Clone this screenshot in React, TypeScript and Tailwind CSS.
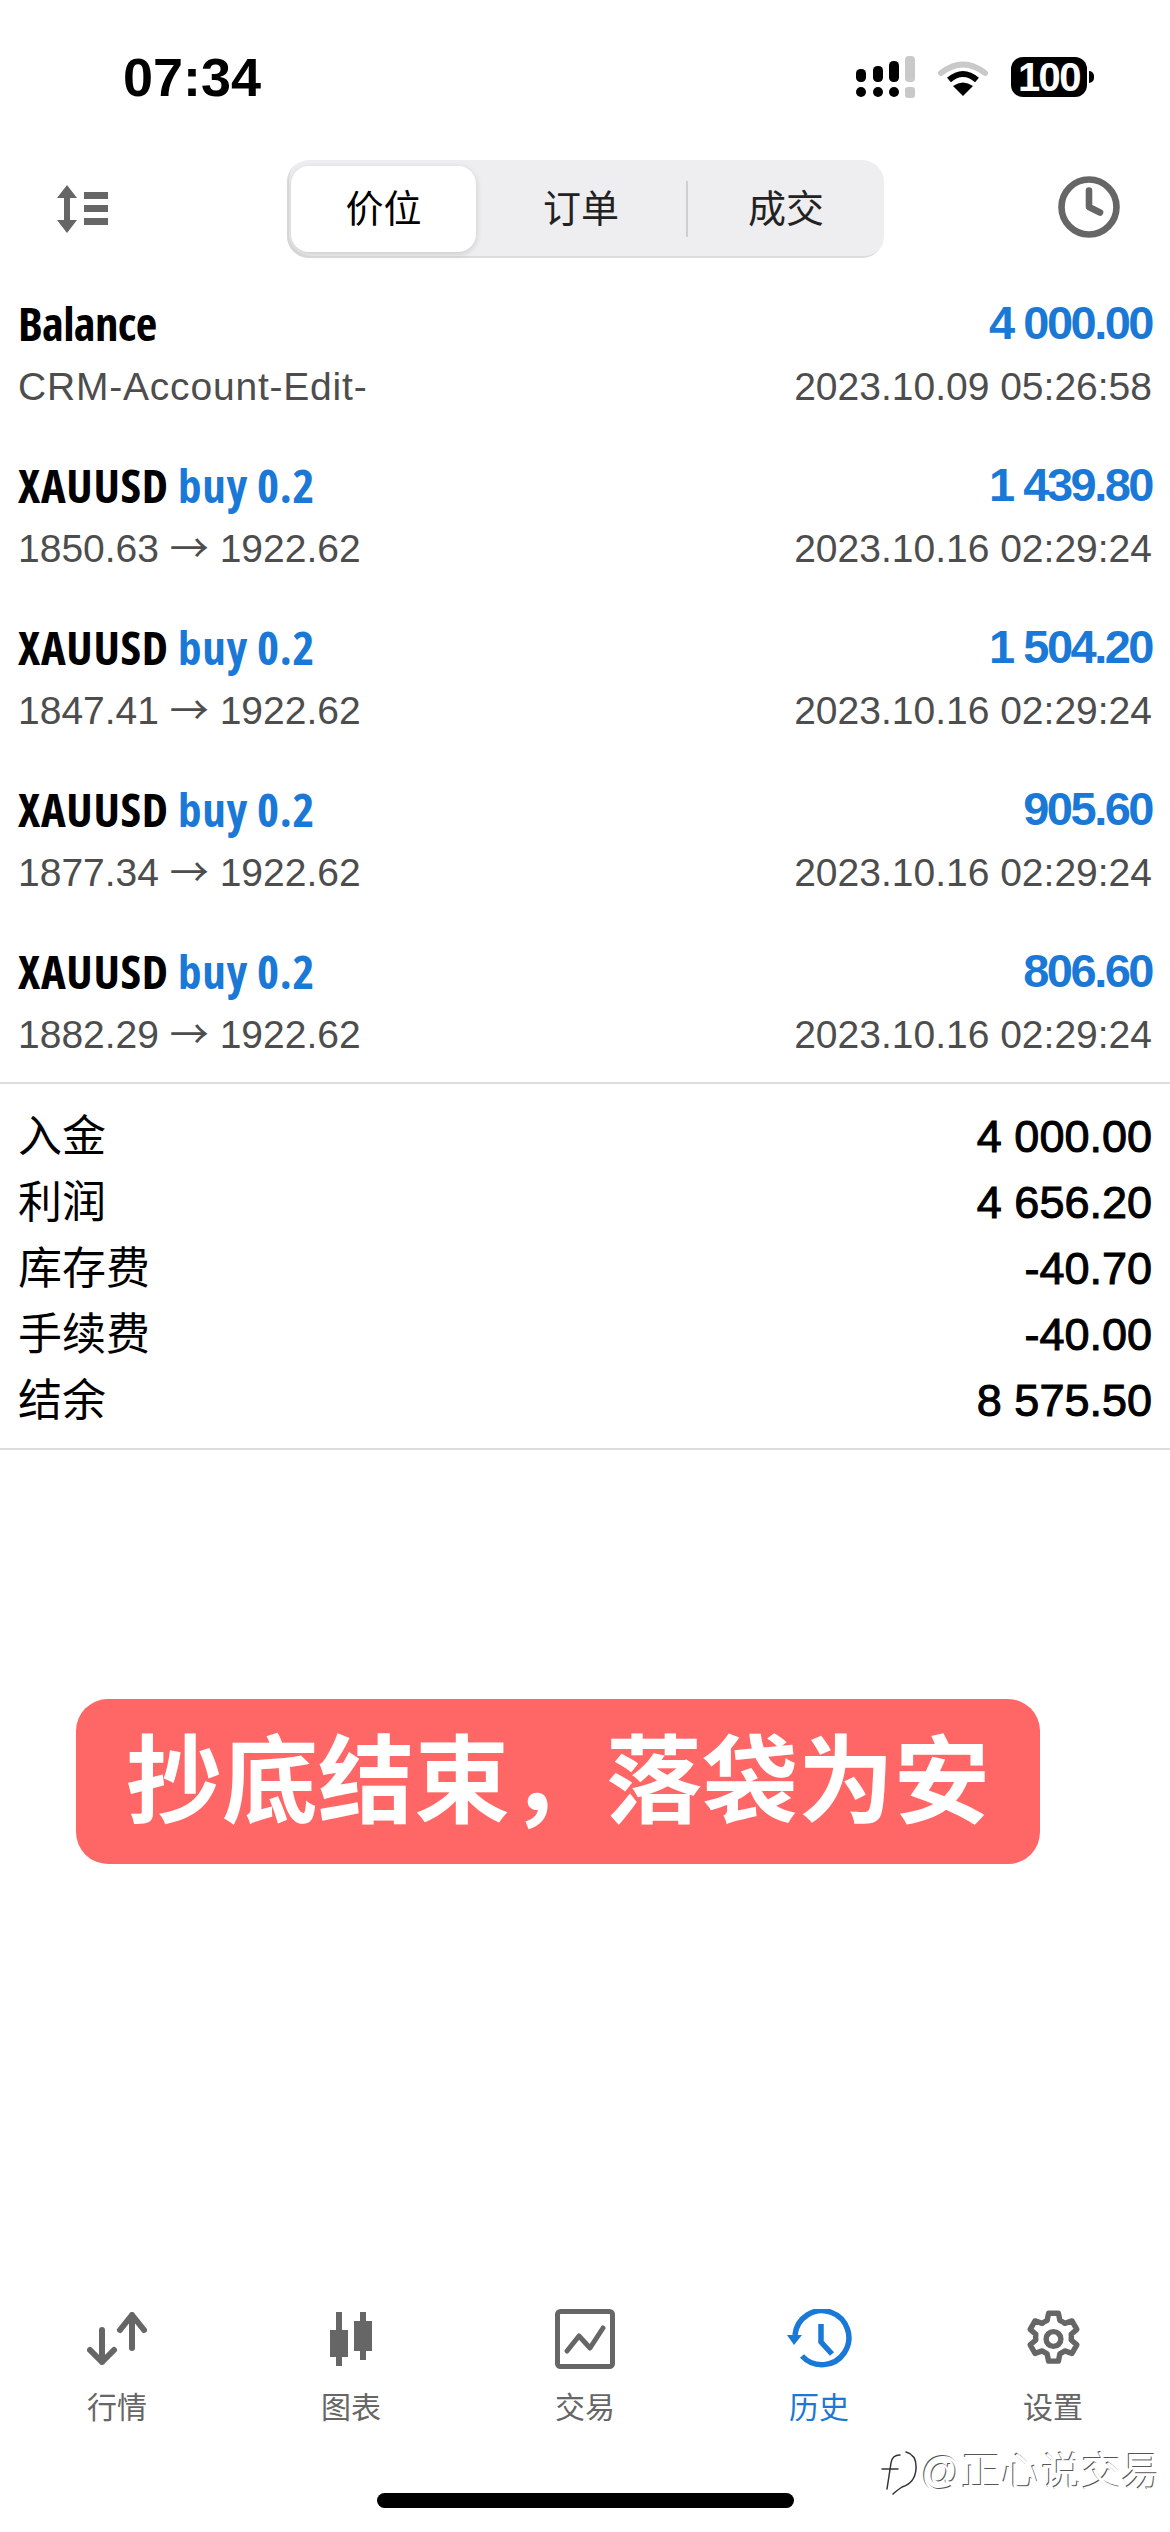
import { Clock4 } from "lucide-react";

const rows = [
  { amount: "1 439.80", from: "1850.63", date: "2023.10.16 02:29:24" },
  { amount: "1 504.20", from: "1847.41", date: "2023.10.16 02:29:24" },
  { amount: "905.60", from: "1877.34", date: "2023.10.16 02:29:24" },
  { amount: "806.60", from: "1882.29", date: "2023.10.16 02:29:24" },
];

const summary = [
  ["入金", "4 000.00"],
  ["利润", "4 656.20"],
  ["库存费", "-40.70"],
  ["手续费", "-40.00"],
  ["结余", "8 575.50"],
];

const sans = "font-['Liberation_Sans','Noto_Sans_CJK_SC',sans-serif]";
const cond = "font-['Open_Sans','Noto_Sans',sans-serif] font-bold [font-stretch:75%]";

function StatusIcons() {
  return (
    <div className="flex items-center">
      <svg width="60" height="42" viewBox="0 0 60 42">
        <rect x="0" y="13" width="10" height="13" rx="4.5" fill="#000" />
        <rect x="17" y="10" width="10" height="16" rx="4.5" fill="#000" />
        <rect x="33" y="5" width="10" height="21" rx="4.5" fill="#000" />
        <rect x="49" y="0" width="10" height="26" rx="4" fill="#c9c9c9" />
        <circle cx="5" cy="36" r="5" fill="#000" />
        <circle cx="22" cy="36" r="5" fill="#000" />
        <circle cx="38" cy="36" r="5" fill="#000" />
        <rect x="49" y="31" width="10" height="11" rx="3" fill="#c9c9c9" />
      </svg>
      <svg width="50" height="37" viewBox="0 0 50 37" className="ml-[22px]">
        <path d="M3 14 Q25 -3 47 14" fill="none" stroke="#c9c9c9" strokeWidth="6" strokeLinecap="round" />
        <path d="M11 21 Q25 9 39 21" fill="none" stroke="#000" strokeWidth="6" />
        <path d="M25 37 L15 27 Q25 20 35 27 Z" fill="#000" />
      </svg>
      <div className="ml-[23px] flex items-center">
        <div className={`flex h-[40px] w-[76px] items-center justify-center rounded-[12px] bg-black text-[40px] font-bold tracking-[-1.5px] text-white ${sans}`}>100</div>
        <div className="ml-[2px] h-[12px] w-[5px] rounded-r-full bg-black" />
      </div>
    </div>
  );
}

function SortIcon() {
  return (
    <svg width="52" height="48" viewBox="0 0 52 48" fill="#666">
      <path d="M11 0 L21 13 L14 13 L14 35 L21 35 L11 48 L1 35 L8 35 L8 13 L1 13 Z" />
      <rect x="28" y="7" width="24" height="7" />
      <rect x="28" y="20" width="24" height="7" />
      <rect x="28" y="33" width="24" height="7" />
    </svg>
  );
}

function ArrowsIcon() {
  return (
    <svg width="60" height="54" viewBox="0 0 60 54" fill="none" stroke="#666" strokeWidth="6" strokeLinecap="round" strokeLinejoin="round">
      <path d="M15 18 V50 M3 38 L15 50 L27 38" />
      <path d="M45 3 V36 M33 18 L45 3 L57 18" />
    </svg>
  );
}

function CandleIcon() {
  return (
    <svg width="42" height="54" viewBox="0 0 42 54" fill="#666">
      <rect x="6" y="0" width="6" height="54" />
      <rect x="0" y="18" width="18" height="27" />
      <rect x="30" y="0" width="6" height="48" />
      <path fillRule="evenodd" d="M24 9 H42 V39 H24 Z M30 15 V33 H36 V15 Z" />
    </svg>
  );
}

function TradeIcon() {
  return (
    <svg width="60" height="60" viewBox="0 0 60 60" fill="none" stroke="#666" strokeLinecap="round" strokeLinejoin="round">
      <rect x="2.5" y="2.5" width="55" height="55" rx="3" strokeWidth="5" />
      <path d="M12 42 L24 27 L35 39 L48 19" strokeWidth="5" />
    </svg>
  );
}

function HistoryIcon() {
  return (
    <svg width="65" height="60" viewBox="0 0 65 60" fill="none" stroke="#1a78d6" strokeWidth="5.5">
      <path d="M8 26 A27 27 0 1 1 15 47" />
      <path d="M0 26 L15 26 L7 36 Z" fill="#1a78d6" stroke="none" />
      <path d="M34 15 V33 L45 45" />
    </svg>
  );
}

function GearIcon() {
  return (
    <svg width="59" height="60" viewBox="0 0 24 24" fill="none" stroke="#666" strokeWidth="2.2" strokeLinejoin="round">
      <path d="M10 1.5 h4 l.6 3 a8 8 0 0 1 2 1.15 l2.9 -1 2 3.45 -2.3 2 a8 8 0 0 1 0 2.3 l2.3 2 -2 3.45 -2.9 -1 a8 8 0 0 1 -2 1.15 l-.6 3 h-4 l-.6 -3 a8 8 0 0 1 -2 -1.15 l-2.9 1 -2 -3.45 2.3 -2 a8 8 0 0 1 0 -2.3 l-2.3 -2 2 -3.45 2.9 1 a8 8 0 0 1 2 -1.15 z" />
      <circle cx="12" cy="12" r="3" />
    </svg>
  );
}

function WatermarkLogo() {
  return (
    <svg width="38" height="46" viewBox="0 0 38 46" fill="none" stroke="#333" strokeWidth="1.5" strokeLinecap="round">
      <path d="M26 3 Q37 6 36 20 Q35 34 22 38 Q16 42 13 45" />
      <path d="M20 6 Q12 6 11 14 L7 40" />
      <path d="M2 20 H18" />
    </svg>
  );
}

function TabItem({ icon, label, active }: { icon: React.ReactNode; label: string; active?: boolean }) {
  return (
    <div className="flex flex-col items-center">
      <div className="flex h-[60px] items-center justify-center">{icon}</div>
      <div className={`mt-[20px] text-[30px] leading-[38px] ${active ? "text-[#1a78d6]" : "text-[#666]"}`}>{label}</div>
    </div>
  );
}

function HistoryRow({ title, amount, sub, date }: { title: React.ReactNode; amount: string; sub: React.ReactNode; date: string }) {
  return (
    <div>
      <div className="flex h-[56px] items-center justify-between">
        <div className={`text-[47px] leading-[56px] text-black ${cond}`}>{title}</div>
        <div className={`text-[47px] font-bold tracking-[-2.5px] text-[#1a78d6] ${sans}`}>{amount}</div>
      </div>
      <div className="mt-[12px] flex h-[48px] items-center justify-between text-[39px] leading-[48px] text-[#4d4d4d]">
        <div>{sub}</div>
        <div>{date}</div>
      </div>
    </div>
  );
}

export default function App() {
  return (
    <div className={`relative flex h-[2532px] w-[1170px] flex-col overflow-hidden bg-white ${sans}`}>
      <div className="flex h-[154px] items-center justify-between pl-[123px] pr-[76px]">
        <div className="text-[54px] font-bold text-black">07:34</div>
        <StatusIcons />
      </div>

      <div className="mt-[6px] flex h-[98px] items-center pl-[56px] pr-[48px]">
        <SortIcon />
        <div className="ml-[179px] flex h-[98px] w-[597px] items-center rounded-[22px] bg-[#eeeef0] pl-[4px] shadow-[inset_2px_-2px_0_#dcdcdc]">
          <div className="flex h-[86px] w-[185px] items-center justify-center rounded-[18px] bg-white text-[38px] text-black shadow-[0_2px_6px_rgba(0,0,0,0.15)]">价位</div>
          <div className="flex w-[210px] justify-center text-[38px] text-[#222]">订单</div>
          <div className="h-[56px] w-[2px] bg-[#cfcfcf]" />
          <div className="flex flex-1 justify-center text-[38px] text-[#222]">成交</div>
        </div>
        <Clock4 size={66} color="#666" strokeWidth={2.4} className="ml-auto -mt-[4px]" />
      </div>

      <div className="mt-[37px] flex flex-col gap-[46px] px-[18px] pb-[23px]">
        <HistoryRow
          title={<span className="tracking-[-0.7px]">Balance</span>}
          amount="4 000.00"
          sub={<span className="tracking-[0.8px]">CRM-Account-Edit-</span>}
          date="2023.10.09 05:26:58"
        />
        {rows.map((r) => (
          <HistoryRow
            key={r.amount}
            title={
              <span className="tracking-[0.7px]">
                XAUUSD <span className="text-[#1a78d6]">buy 0.2</span>
              </span>
            }
            amount={r.amount}
            sub={
              <>
                {r.from} <span className="font-['Noto_Sans_CJK_SC',sans-serif] leading-none">→</span> 1922.62
              </>
            }
            date={r.date}
          />
        ))}
      </div>

      <div className="border-y-2 border-[#dcdcdc] px-[18px] pb-[14px] pt-[20px]">
        {summary.map(([label, value]) => (
          <div key={label} className="flex h-[66px] items-center justify-between text-black">
            <div className="text-[44px]">{label}</div>
            <div className="text-[45px] [-webkit-text-stroke:1px_#000]">{value}</div>
          </div>
        ))}
      </div>

      <div className="ml-[76px] mt-[249px] flex h-[165px] w-[964px] items-center justify-center rounded-[32px] bg-[#ff6666] text-[96px] font-bold text-white">
        抄底结束，落袋为安
      </div>

      <div className="mt-auto grid grid-cols-5">
        <TabItem icon={<ArrowsIcon />} label="行情" />
        <TabItem icon={<CandleIcon />} label="图表" />
        <TabItem icon={<TradeIcon />} label="交易" />
        <TabItem icon={<HistoryIcon />} label="历史" active />
        <TabItem icon={<GearIcon />} label="设置" />
      </div>
      <div className="mb-[24px] ml-[377px] mt-[66px] h-[15px] w-[417px] rounded-full bg-black" />

      <div className="absolute left-[880px] top-[2442px] flex items-center text-[40px] text-white [text-shadow:-1px_-1px_0_#555]">
        <WatermarkLogo />
        <span className="ml-[3px]">@正心说交易</span>
      </div>
    </div>
  );
}
